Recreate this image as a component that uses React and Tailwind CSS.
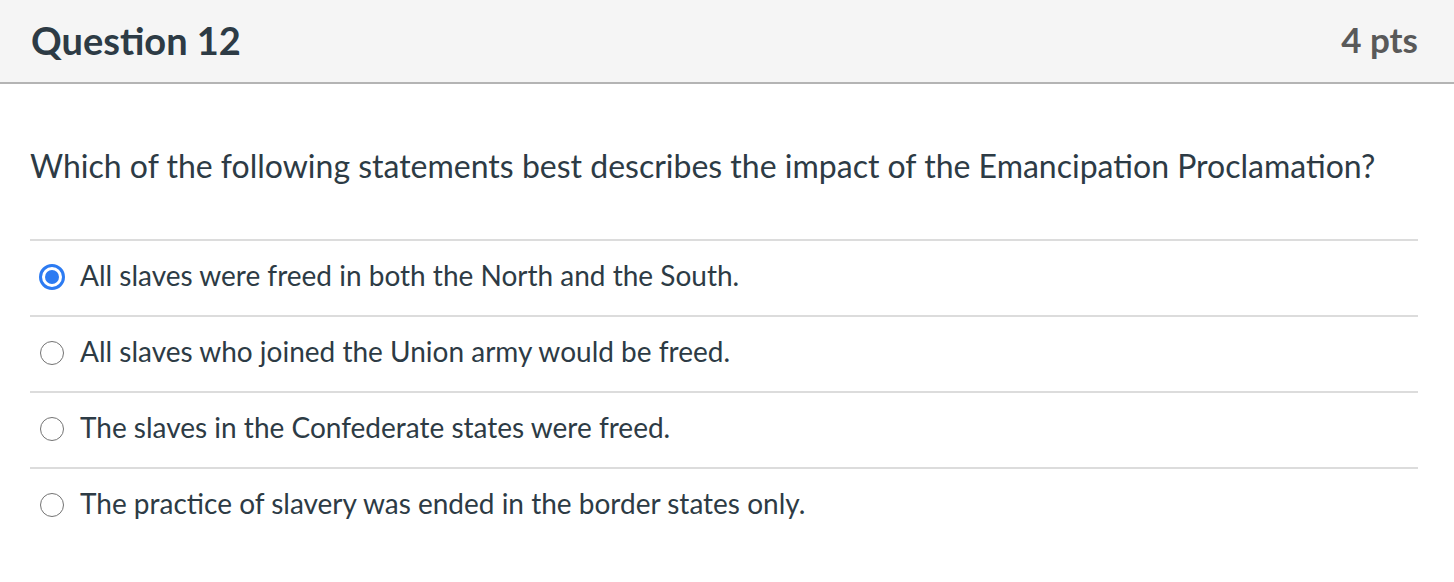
const answers = [
  { id: "a", text: "All slaves were freed in both the North and the South.", checked: true },
  { id: "b", text: "All slaves who joined the Union army would be freed." },
  { id: "c", text: "The slaves in the Confederate states were freed." },
  { id: "d", text: "The practice of slavery was ended in the border states only." },
];

const Radio = ({ checked }) =>
  checked ? (
    <span className="flex h-[26px] w-[26px] shrink-0 items-center justify-center rounded-full border-[3px] border-[#2c7bf2] bg-white">
      <span className="h-[14px] w-[14px] rounded-full bg-[#2c7bf2]" />
    </span>
  ) : (
    <span className="ml-[1px] mr-[1px] h-[24px] w-[24px] shrink-0 rounded-full border-[1.5px] border-[#737373] bg-white" />
  );

export default function App() {
  return (
    <div
      className="min-h-[582px] bg-white text-[#2d3b45]"
      style={{ fontFamily: "Lato, 'Open Sans', sans-serif" }}
    >
      <div className="flex h-[84px] items-center justify-between border-b-2 border-[#b4b4b4] bg-[#f5f5f5] pb-[3px] pl-[31px] pr-[36px]">
        <h2 className="text-[38px] font-bold leading-none text-[#2d3b45]">Question 12</h2>
        <div className="text-[35px] font-bold leading-none text-[#595959]">4 pts</div>
      </div>

      <div className="pl-[30px] pr-[36px]">
        <p className="pt-[64px] pb-[55px] text-[32px] leading-[36px]">
          Which of the following statements best describes the impact of the Emancipation Proclamation?
        </p>

        <div>
          {answers.map((a) => (
            <label
              key={a.id}
              className="flex h-[76px] items-center gap-[15px] border-t-2 border-[#dcdcdc] pb-[3px] pl-[9px] text-[28px]"
            >
              <Radio checked={a.checked} />
              <span className="pb-[4px] leading-[34px]">{a.text}</span>
            </label>
          ))}
        </div>
      </div>
    </div>
  );
}
